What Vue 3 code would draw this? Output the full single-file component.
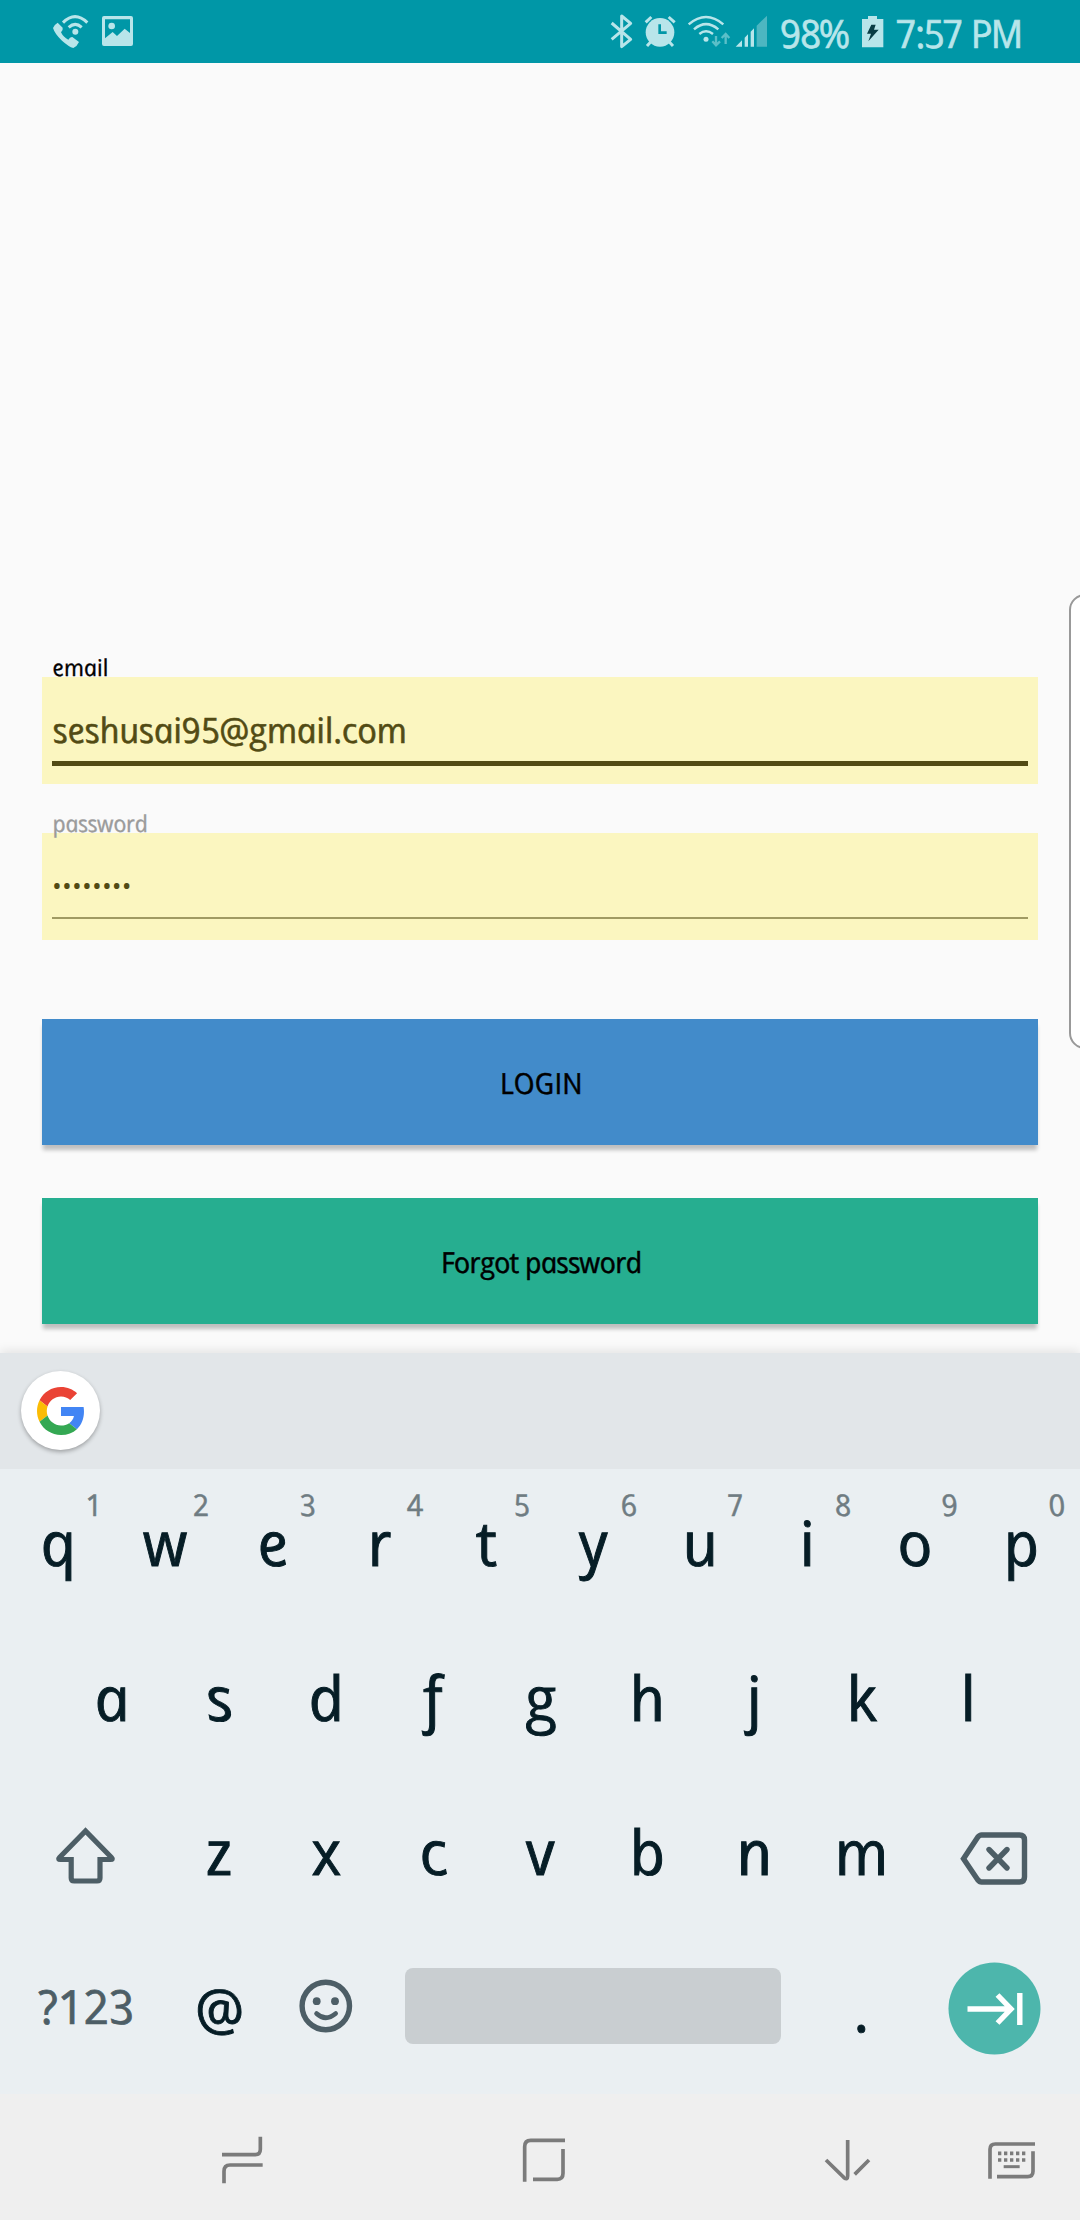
<script setup>
const topRow = 'qwertyuiop'.split('').map((c, i) => ({ c, hint: String((i + 1) % 10) }))
const homeRow = 'asdfghjkl'.split('')
const bottomRow = 'zxcvbnm'.split('')
</script>

<template>
  <div class="screen">
    <header class="status">
      <svg class="st-left" viewBox="0 0 420 189" width="140" height="63">
        <g fill="none" stroke="#b8e5ea" stroke-width="9">
          <path d="M189 68Q225 32 262 68" />
          <path d="M206 82Q226 64 245 82" />
        </g>
        <circle cx="226" cy="95" r="9" fill="#b8e5ea" />
        <path fill="#b8e5ea" d="M159 84Q165 72 173 68L188 83Q190 90 183 97Q190 112 205 119Q210 110 217 111L237 126Q232 138 220 144Q206 140 186 122Q165 103 159 84Z" />
        <path fill="#b8e5ea" fill-rule="evenodd" d="M312 48H393Q399 48 399 54V132Q399 138 393 138H312Q306 138 306 132V54Q306 48 312 48ZM315 58V115L338 96L351 108L374 86L390 99V58Z" />
        <circle cx="335" cy="78" r="10" fill="#b8e5ea" />
      </svg>
      <svg class="st-right" viewBox="30 0 525 189" width="175" height="63">
        <path d="M65 69L122 118L95 140V48L122 70L65 118" fill="none" stroke="#b8e5ea" stroke-width="9" stroke-linejoin="round" />
        <circle cx="210" cy="97" r="43" fill="#b8e5ea" />
        <g stroke="#b8e5ea" stroke-width="9">
          <path d="M167 67L184 51M236 51L254 67M171 138L184 124M236 124L249 138" />
        </g>
        <path d="M209 73V98H230" fill="none" stroke="#0097a7" stroke-width="8" />
        <g fill="none" stroke="#b8e5ea" stroke-width="7.5">
          <path d="M296 73Q348 29 400 73" />
          <path d="M312 88Q348 57 385 88" />
          <path d="M328 102Q348 86 369 102" />
        </g>
        <circle cx="348" cy="118" r="7.5" fill="#b8e5ea" />
        <path d="M378 108V136M367 124L378 136L390 124M407 132V103M395 114L407 102L418 114" fill="none" stroke="#5bbfc8" stroke-width="7" />
        <path d="M437 140L456 121V140ZM464 113L474 103V140H464ZM482 95L492 85V140H482Z" fill="#b8e5ea" />
        <path d="M500 77L531 47V140H500Z" fill="#4db6c1" />
      </svg>
      <span class="pct"><b class="hand">98%</b></span>
      <svg class="st-bat" viewBox="795 0 105 189" width="35" height="63">
        <path d="M834 48H861V57H880V142H816V57H834Z" fill="#b8e5ea" />
        <path d="M844 74H857L852 89H866L835 124L843 101H831Z" fill="#083d45" />
      </svg>
      <span class="time"><b class="hand">7:57 PM</b></span>
    </header>

    <main class="form">
      <label class="label on"><b class="hand">email</b></label>
      <div class="field active"><b class="hand">seshusai95@gmail.com</b></div>
      <label class="label off"><b class="hand">password</b></label>
      <div class="field secret"><b class="dots">••••••••</b></div>
      <button class="btn login"><b class="hand">LOGIN</b></button>
      <button class="btn forgot"><b class="hand">Forgot password</b></button>
    </main>
    <div class="edge"></div>

    <section class="keyboard">
      <div class="strip">
        <div class="google">
          <svg viewBox="0 0 48 48" width="48" height="48">
            <path fill="#EA4335" d="M24 9.5c3.54 0 6.71 1.22 9.21 3.6l6.85-6.85C35.9 2.38 30.47 0 24 0 14.62 0 6.51 5.38 2.56 13.22l7.98 6.19C12.43 13.72 17.74 9.5 24 9.5z" />
            <path fill="#4285F4" d="M46.98 24.55c0-1.57-.15-3.09-.38-4.55H24v9.02h12.94c-.58 2.96-2.26 5.48-4.78 7.18l7.73 6c4.51-4.18 7.09-10.36 7.09-17.65z" />
            <path fill="#FBBC05" d="M10.53 28.59c-.48-1.45-.76-2.99-.76-4.59s.27-3.14.76-4.59l-7.98-6.19C.92 16.46 0 20.12 0 24c0 3.88.92 7.54 2.56 10.78l7.97-6.19z" />
            <path fill="#34A853" d="M24 48c6.48 0 11.93-2.13 15.89-5.81l-7.73-6c-2.15 1.45-4.92 2.3-8.16 2.3-6.26 0-11.57-4.22-13.47-9.91l-7.98 6.19C6.51 42.62 14.62 48 24 48z" />
          </svg>
        </div>
      </div>
      <div class="row first">
        <div v-for="k in topRow" :key="k.c" class="key">
          <b class="hand">{{ k.c }}</b>
          <span class="hint"><b class="hand">{{ k.hint }}</b></span>
        </div>
      </div>
      <div class="row second">
        <div v-for="c in homeRow" :key="c" class="key"><b class="hand">{{ c }}</b></div>
      </div>
      <div class="row third">
        <svg viewBox="5.5 1784 159 154.5" width="159" height="154.5" fill="none" stroke="#4d5e66" stroke-width="5.2">
          <path d="M85 1831L59 1857.5Q57 1859.500 60 1859.500H70.700V1878Q70.700 1881 73.700 1881H96.500Q99.500 1881 99.500 1878V1859.500H110Q113 1859.500 111 1857.500Z" />
        </svg>
        <div v-for="c in bottomRow" :key="c" class="key"><b class="hand">{{ c }}</b></div>
        <svg viewBox="913.5 1784 160 154.5" width="160" height="154.5" fill="none" stroke="#4d5e66" stroke-width="5.4">
          <path d="M981 1835H1019Q1024 1835 1024 1840V1877Q1024 1882 1019 1882H981Q979 1882 977 1879.500L963 1858.700L977 1837.500Q979 1835 981 1835Z" />
          <path d="M988.500 1849.500L1006.500 1868M1006.500 1849.500L988.500 1868" stroke-linecap="round" />
        </svg>
      </div>
      <div class="row fourth">
        <div class="sym"><b class="hand">?123</b></div>
        <div class="key at"><b class="hand">@</b></div>
        <svg viewBox="271.5 1938.5 107 155" width="107" height="155">
          <circle cx="325.300" cy="2005.500" r="23.700" fill="none" stroke="#4d5e66" stroke-width="5.400" />
          <circle cx="316.200" cy="2000.700" r="3.900" fill="#4d5e66" />
          <circle cx="334.500" cy="2000.700" r="3.900" fill="#4d5e66" />
          <path d="M316 2013Q325 2021.500 335.200 2013" fill="none" stroke="#4d5e66" stroke-width="4.600" stroke-linecap="round" />
        </svg>
        <div class="space"></div>
        <div class="key dot"><b class="hand">.</b></div>
        <svg viewBox="913.5 1938.5 160 155" width="160" height="155">
          <circle cx="994" cy="2008" r="46" fill="#4db6ac" />
          <path d="M967 2008.500H1011M997 1994.500L1010.500 2008.500L997 2022.500M1019.300 1992.500V2024.500" fill="none" stroke="#fff" stroke-width="5.400" />
        </svg>
      </div>
    </section>

    <nav class="nav">
      <svg viewBox="0 12 450 378" width="150" height="126"><path d="M126 194H226Q241 194 241 178V140M132 280V244Q132 225 150 225H248" /></svg>
      <svg viewBox="900 12 450 378" width="150" height="126"><path d="M1034 275V170Q1034 151 1052 151H1155M1149 177V250Q1149 268 1132 268H1059" /></svg>
      <svg viewBox="0 12 450 378" width="150" height="126"><path d="M203 150V258Q203 271 192 263L138 210M267 210L224 253" /></svg>
      <svg class="kb" viewBox="450 12 450 378" width="150" height="126">
        <path d="M630 266V178Q630 162 646 162H765M759 184V244Q759 260 743 260H651" />
        <path d="M671 230H719" stroke-width="9" />
        <path d="M654 190H738M654 210H738" stroke-dasharray="10 8" />
      </svg>
    </nav>
  </div>
</template>

<style>
html, body { margin: 0; background: #fafafa; }
</style>

<style scoped>
.screen {
  position: relative;
  width: 1080px;
  height: 2220px;
  overflow: hidden;
  display: flex;
  flex-direction: column;
  background: #fafafa;
  font-family: "Open Sans", "Noto Sans", sans-serif;
}
svg { display: block; flex: none; }
.hand {
  display: inline-block;
  font-style: italic;
  font-weight: 500;
  white-space: pre;
  transform: skewX(12deg);
  -webkit-text-stroke: .015em currentColor;
}
.status { height: 63px; flex: none; display: flex; background: #0097a7; color: #b8e5ea; }
.st-right { margin-left: 460px; }
.pct, .time { font-size: 39px; line-height: 65px; letter-spacing: -2px; }
.pct { width: 80px; padding-left: 4px; box-sizing: border-box; }
.time { padding-left: 5px; }
.form { height: 1290px; flex: none; padding: 0 42px; box-sizing: border-box; display: flex; flex-direction: column; }
.label { height: 49px; padding-left: 10px; font-size: 23px; line-height: 79px; }
.label.on { margin-top: 565px; color: #000; }
.label.off { letter-spacing: -.35px; color: #9b9b9b; }
.field {
  height: 107px;
  box-sizing: border-box;
  padding: 0 10px;
  font-size: 35px;
  line-height: 105px;
  letter-spacing: -.35px;
  color: #524b14;
  background: linear-gradient(#a09a62, #a09a62) 10px 84px / 976px 2px no-repeat, #fbf6c0;
}
.field.active { background: linear-gradient(#524b14, #524b14) 10px 84px / 976px 5px no-repeat, #fbf6c0; }
.field.secret { line-height: 98px; }
.dots { font-size: 26px; font-weight: 400; letter-spacing: .2px; }
.btn {
  height: 126px;
  flex: none;
  padding: 0;
  border: 0;
  font: 29px/127px "Open Sans", sans-serif;
  color: #000;
  box-shadow: 0 6px 4px -1px rgba(0, 0, 0, .24);
}
.login { margin-top: 79px; background: #428bca; }
.forgot { margin-top: 53px; letter-spacing: -.85px; background: #26ae90; }
.edge {
  position: absolute;
  left: 1069px;
  top: 594px;
  width: 40px;
  height: 455px;
  box-sizing: border-box;
  border: 2px solid #999;
  border-radius: 16px;
  background: #fff;
}
.keyboard { height: 741px; flex: none; background: #eaeff2; color: #061d26; box-shadow: 0 -2px 10px rgba(0, 0, 0, .1); }
.strip { height: 116px; padding: 18px 21px; box-sizing: border-box; margin-bottom: 6px; background: #e2e6e9; }
.google {
  width: 79px;
  height: 79px;
  border-radius: 50%;
  display: flex;
  align-items: center;
  justify-content: center;
  background: #fff;
  box-shadow: 0 2px 4px rgba(0, 0, 0, .3);
}
.row { height: 154.5px; display: flex; }
.first { padding-left: 3.5px; }
.second { padding-left: 58.5px; }
.third, .fourth { padding-left: 5.5px; }
.key { position: relative; flex: none; width: 107px; text-align: center; font-size: 62px; line-height: 135px; }
.second .key { left: -1px; }
.hint { position: absolute; left: 70px; top: 1px; width: 40px; font-size: 30px; line-height: 58px; color: #6f7c82; }
.sym { width: 158px; margin-right: 1px; flex: none; text-align: center; font-size: 47px; line-height: 134px; letter-spacing: -.5px; color: #4d5e66; }
.key.at { font-size: 57px; line-height: 138px; }
.key.dot { line-height: 139px; }
.space { width: 376px; height: 76px; flex: none; margin: 29.5px 25.5px 0 26.500px; border-radius: 8px; background: #c9ced1; }
.nav { height: 126px; flex: none; display: flex; gap: 150px; padding-left: 180px; background: #efefef; }
.nav svg { fill: none; stroke: #7b7b7b; stroke-width: 11; }
.nav .kb { margin-left: -150px; }
</style>
